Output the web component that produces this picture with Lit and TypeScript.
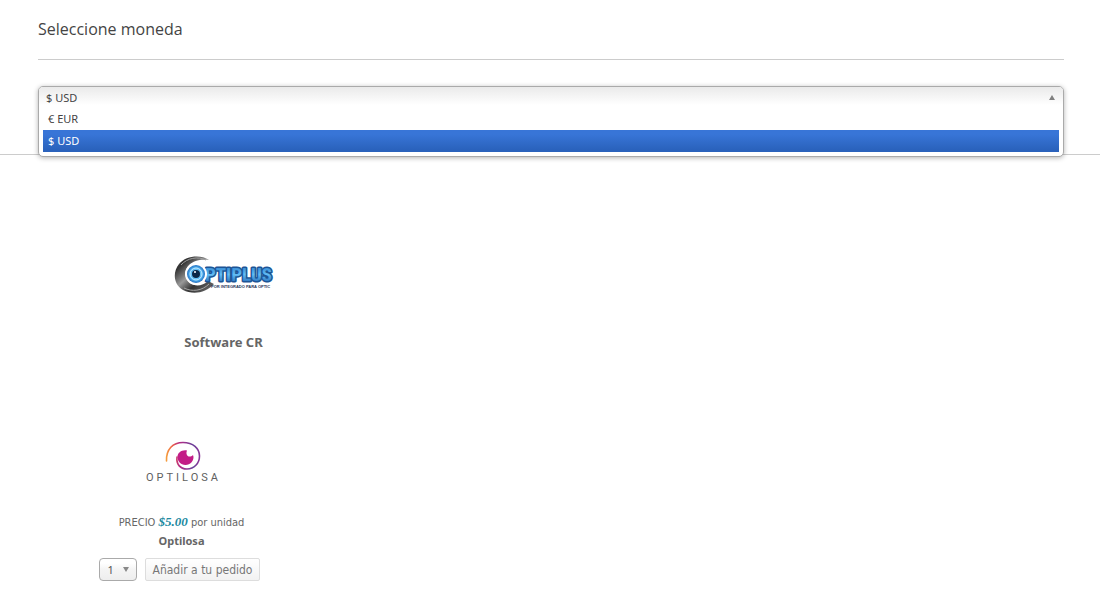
import { LitElement, html, css } from "lit";
import { customElement, state } from "lit/decorators.js";

const CURRENCIES = [
  { code: "EUR", label: "€ EUR" },
  { code: "USD", label: "$ USD" },
];

@customElement("currency-picker")
class CurrencyPicker extends LitElement {
  @state() selected = "USD";

  static styles = css`
    :host {
      display: block;
      position: relative;
      height: 24px;
      font: 11px/22px "Noto Sans", "Open Sans", sans-serif;
    }
    .box {
      position: absolute;
      top: 0;
      left: 0;
      right: 0;
      box-sizing: border-box;
      border: 1px solid #aaa;
      border-radius: 5px;
      background: #fff;
      box-shadow: 0 1px 5px rgba(0, 0, 0, 0.3);
      overflow: hidden;
    }
    .current {
      position: relative;
      background: linear-gradient(#eaeaea, #fff 18px);
    }
    select {
      appearance: none;
      display: block;
      width: 100%;
      height: 21px;
      margin: 0;
      padding: 0 7px;
      border: 0;
      outline: 0;
      background: transparent;
      color: #444;
      font: inherit;
    }
    .arrow {
      position: absolute;
      right: 8px;
      top: 8px;
      border: 3px solid transparent;
      border-top: 0;
      border-bottom: 5px solid #808080;
    }
    .list {
      display: flex;
      flex-direction: column;
      padding: 0 4px 4px;
    }
    .option {
      padding: 0 5px;
      border: 0;
      background: transparent;
      color: #444;
      font: inherit;
      text-align: left;
    }
    .option[aria-selected="true"] {
      background: linear-gradient(#3875d7 20%, #2a62bc 90%);
      color: #fff;
    }
  `;

  render() {
    return html`
      <div class="box">
        <div class="current">
          <select
            aria-label="Moneda"
            .value=${this.selected}
            @change=${(e: Event) => (this.selected = (e.target as HTMLSelectElement).value)}
          >
            ${CURRENCIES.map(
              (c) => html`<option value=${c.code} ?selected=${c.code === this.selected}>${c.label}</option>`
            )}
          </select>
          <span class="arrow"></span>
        </div>
        <div class="list" role="listbox" aria-label="Monedas">
          ${CURRENCIES.map(
            (c) => html`<button
              type="button"
              class="option"
              role="option"
              aria-selected=${c.code === this.selected ? "true" : "false"}
              @click=${() => (this.selected = c.code)}
            >${c.label}</button>`
          )}
        </div>
      </div>
    `;
  }
}

@customElement("optiplus-logo")
class OptiplusLogo extends LitElement {
  static styles = css`
    :host,
    svg {
      display: block;
    }
    .name {
      font: bold 19px "Liberation Sans Narrow", "Roboto Condensed", "Open Sans", sans-serif;
      paint-order: stroke;
    }
    .tag {
      font: bold 4px "Liberation Sans", sans-serif;
    }
  `;

  render() {
    return html`
      <svg width="100" height="40" viewBox="0 0 100 40" role="img" aria-label="Optiplus">
        <defs>
          <linearGradient id="steel" x1="0" y1="0" x2="1" y2="1">
            <stop offset="0" stop-color="#555"></stop>
            <stop offset=".2" stop-color="#333"></stop>
            <stop offset=".45" stop-color="#999"></stop>
            <stop offset=".65" stop-color="#333"></stop>
            <stop offset="1" stop-color="#777"></stop>
          </linearGradient>
          <linearGradient id="blue" x1="0" y1="0" x2="0" y2="1">
            <stop offset=".1" stop-color="#2f7fcc"></stop>
            <stop offset=".5" stop-color="#62bcf4"></stop>
            <stop offset=".9" stop-color="#2266b4"></stop>
          </linearGradient>
          <radialGradient id="iris">
            <stop offset=".2" stop-color="#8cdcff"></stop>
            <stop offset=".7" stop-color="#4fb0f0"></stop>
            <stop offset="1" stop-color="#2470c0"></stop>
          </radialGradient>
        </defs>
        <path
          d="M35 5C27-.5 12 .5 5 9c-7 9-5 21 4 26 10 5 23 3 31-6l-6-3c-5 5-13 6-18 2-6-5-6-13-1-18 5-5 12-6 20-5z"
          fill="url(#steel)"
        ></path>
        <path d="M32 5C24 1 13 3 7 10" fill="none" stroke="#a0a0a0" stroke-width="1"></path>
        <path d="M10 33c8 4 18 3 25-4" fill="none" stroke="#a4a4a4" stroke-width="1"></path>
        <text
          class="name"
          x="31"
          y="26"
          fill="url(#blue)"
          stroke="#1c5596"
          stroke-width="3"
          stroke-linejoin="round"
        >PTIPLUS</text>
        <circle cx="22" cy="19" r="11" fill="#fff"></circle>
        <circle cx="22" cy="19" r="9" fill="url(#iris)"></circle>
        <circle cx="22" cy="19" r="6" fill="none" stroke="#c5ecff" stroke-width="1"></circle>
        <circle cx="22" cy="19" r="4" fill="#0c2747"></circle>
        <circle cx="21" cy="17" r="1" fill="#fff"></circle>
        <text class="tag" x="37" y="33" fill="#1d3558">POR INTEGRADO PARA OPTIC</text>
      </svg>
    `;
  }
}

@customElement("optilosa-logo")
class OptilosaLogo extends LitElement {
  static styles = css`
    :host,
    svg {
      display: block;
    }
    .name {
      font: 11px "Roboto", sans-serif;
      letter-spacing: 3px;
    }
  `;

  render() {
    return html`
      <svg width="76" height="46" viewBox="0 0 76 46" role="img" aria-label="Optilosa">
        <defs>
          <linearGradient id="arc" gradientUnits="userSpaceOnUse" x1="22" y1="18" x2="56" y2="18">
            <stop offset="0" stop-color="#f5a13c"></stop>
            <stop offset=".18" stop-color="#ee6044"></stop>
            <stop offset=".4" stop-color="#b32b86"></stop>
            <stop offset=".8" stop-color="#69439a"></stop>
            <stop offset="1" stop-color="#8c3397"></stop>
          </linearGradient>
        </defs>
        <path
          d="M22.500 22C22 10 29 3.500 39 3.500c10 0 16.500 6 16.500 13.500S50 30 43 30s-11-5-10-12"
          fill="none"
          stroke="url(#arc)"
          stroke-width="1.600"
          stroke-linecap="round"
        ></path>
        <path
          d="M43 11.500c-5-1-9.500 2-9.500 6.500 0 4 3 8 8 8s8-4 8-8l-.5-2c-2 2-5 2-6 0-.8-1.500-.6-3 0-4.500z"
          fill="#c31c86"
        ></path>
        <text class="name" x="2" y="42" fill="#606060">OPTILOSA</text>
      </svg>
    `;
  }
}

@customElement("app-root")
class AppRoot extends LitElement {
  static styles = css`
    :host {
      display: block;
      background: #fff;
      color: #666;
      font: 12px/18px "DejaVu Sans Condensed", "Noto Sans", sans-serif;
    }
    .currency {
      padding: 0 36px 44px 38px;
      border-bottom: 1px solid #ccc;
    }
    h1 {
      margin: 0 0 26px;
      padding: 18px 0 19px;
      border-bottom: 1px solid #ccc;
      color: #444;
      font: 16px/22px "Open Sans", sans-serif;
    }
    .category {
      display: flex;
      flex-direction: column;
      align-items: center;
      gap: 38px;
      box-sizing: border-box;
      width: 41%;
      padding: 100px 4px 0 0;
    }
    h2 {
      margin: 0;
      font: bold 13px/18px "Noto Sans", "Open Sans", sans-serif;
    }
    .product {
      display: flex;
      flex-direction: column;
      align-items: center;
      width: 33%;
      padding: 88px 0 16px;
    }
    .price {
      margin: 28px 0 0;
      font-size: 11px;
    }
    .amount {
      color: #21899f;
      font: italic bold 13px/18px "Liberation Serif", serif;
    }
    h3 {
      margin: 0 0 8px;
      font: bold 11px/18px "Noto Sans", "Open Sans", sans-serif;
    }
    .order {
      display: flex;
      align-items: center;
      gap: 8px;
      margin-right: 4px;
    }
    .quantity {
      position: relative;
    }
    .quantity select {
      appearance: none;
      display: block;
      width: 38px;
      height: 23px;
      padding: 0 8px;
      border: 1px solid #aaa;
      border-radius: 4px;
      background: linear-gradient(#fff 20%, #f4f4f4 50%, #eee);
      color: #555;
      font: 11px "Noto Sans", sans-serif;
    }
    .quantity .arrow {
      position: absolute;
      right: 8px;
      top: 9px;
      border: 3px solid transparent;
      border-bottom: 0;
      border-top: 5px solid #888;
      pointer-events: none;
    }
    .add {
      height: 23px;
      padding: 0 7px;
      border: 1px solid #ddd;
      border-radius: 2px;
      background: linear-gradient(#fff, #f2f2f2);
      color: #777;
      font: 12px "DejaVu Sans Condensed", "Noto Sans", sans-serif;
    }
  `;

  render() {
    return html`
      <section class="currency">
        <h1>Seleccione moneda</h1>
        <currency-picker></currency-picker>
      </section>
      <section class="category">
        <optiplus-logo></optiplus-logo>
        <h2>Software CR</h2>
      </section>
      <section class="product">
        <optilosa-logo></optilosa-logo>
        <div class="price">PRECIO <span class="amount">$5.00</span> por unidad</div>
        <h3>Optilosa</h3>
        <div class="order">
          <div class="quantity">
            <select aria-label="Cantidad">
              <option>1</option>
              <option>2</option>
              <option>3</option>
            </select>
            <span class="arrow"></span>
          </div>
          <button type="button" class="add">Añadir a tu pedido</button>
        </div>
      </section>
    `;
  }
}
